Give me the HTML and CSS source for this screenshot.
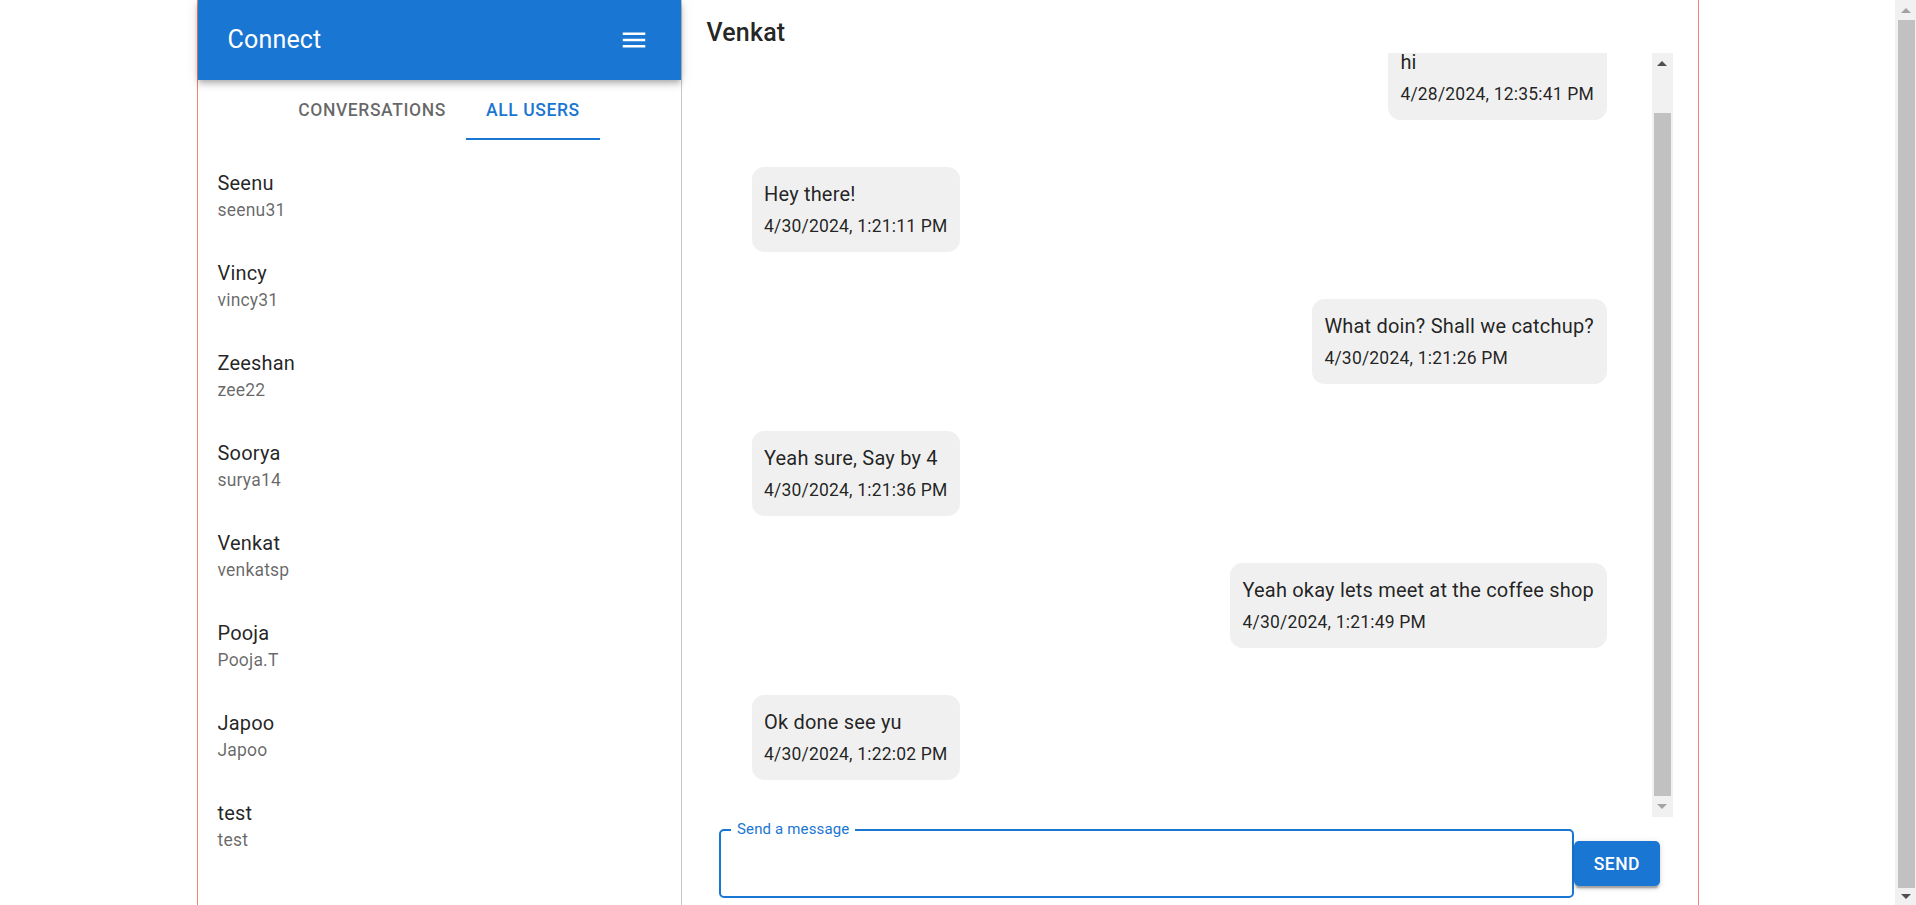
FILE: index.html
```html
<!DOCTYPE html>
<html lang="en">
<head>
<meta charset="utf-8">
<title>Connect</title>
<link rel="stylesheet" href="styles.css">
</head>
<body>
<div class="viewport">
  <div class="app">
    <aside class="sidebar">
      <header class="appbar">
        <h1 class="brand">Connect</h1>
        <svg class="menu-icon" viewBox="0 0 24 24" width="30" height="30" aria-hidden="true"><path fill="#fff" d="M3 18h18v-2H3v2zm0-5h18v-2H3v2zm0-7v2h18V6H3z"/></svg>
      </header>
      <nav class="tabs">
        <button class="tab">Conversations</button>
        <button class="tab tab-active">All Users</button>
      </nav>
      <ul class="user-list">
        <li class="user"><span class="user-name">Seenu</span><span class="user-handle">seenu31</span></li>
        <li class="user"><span class="user-name">Vincy</span><span class="user-handle">vincy31</span></li>
        <li class="user"><span class="user-name">Zeeshan</span><span class="user-handle">zee22</span></li>
        <li class="user"><span class="user-name">Soorya</span><span class="user-handle">surya14</span></li>
        <li class="user"><span class="user-name">Venkat</span><span class="user-handle">venkatsp</span></li>
        <li class="user"><span class="user-name">Pooja</span><span class="user-handle">Pooja.T</span></li>
        <li class="user"><span class="user-name">Japoo</span><span class="user-handle">Japoo</span></li>
        <li class="user"><span class="user-name">test</span><span class="user-handle">test</span></li>
      </ul>
    </aside>
    <main class="chat">
      <h2 class="chat-title">Venkat</h2>
      <div class="messages-area">
        <div class="messages">
          <div class="messages-inner">
            <div class="msg-row mine"><div class="bubble"><p class="msg-text">hi</p><p class="msg-time">4/28/2024, 12:35:41 PM</p></div></div>
            <div class="msg-row"><div class="bubble"><p class="msg-text">Hey there!</p><p class="msg-time">4/30/2024, 1:21:11 PM</p></div></div>
            <div class="msg-row mine"><div class="bubble"><p class="msg-text">What doin? Shall we catchup?</p><p class="msg-time">4/30/2024, 1:21:26 PM</p></div></div>
            <div class="msg-row"><div class="bubble"><p class="msg-text">Yeah sure, Say by 4</p><p class="msg-time">4/30/2024, 1:21:36 PM</p></div></div>
            <div class="msg-row mine"><div class="bubble"><p class="msg-text">Yeah okay lets meet at the coffee shop</p><p class="msg-time">4/30/2024, 1:21:49 PM</p></div></div>
            <div class="msg-row"><div class="bubble"><p class="msg-text">Ok done see yu</p><p class="msg-time">4/30/2024, 1:22:02 PM</p></div></div>
          </div>
        </div>
        <div class="vscroll vscroll-messages" aria-hidden="true">
          <div class="vscroll-btn"><span class="arrow-up arrow-dark"></span></div>
          <div class="vscroll-gap"></div>
          <div class="vscroll-thumb"></div>
          <div class="vscroll-btn"><span class="arrow-down arrow-light"></span></div>
        </div>
      </div>
      <form class="composer">
        <fieldset class="field">
          <legend class="field-label">Send a message</legend>
          <input class="field-input" type="text" aria-label="Send a message">
        </fieldset>
        <button class="send" type="button">Send</button>
      </form>
    </main>
  </div>
</div>
<div class="vscroll vscroll-page" aria-hidden="true">
  <div class="vscroll-btn vscroll-btn-top"><span class="arrow-up arrow-light"></span></div>
  <div class="vscroll-thumb"></div>
  <div class="vscroll-btn vscroll-btn-bottom"><span class="arrow-down arrow-dark"></span></div>
</div>
</body>
</html>
```
FILE: styles.css
```css
html, body {
  margin: 0;
  padding: 0;
  background: #fff;
}

body {
  font-family: Roboto, "Liberation Sans", Arial, sans-serif;
  color: rgba(0, 0, 0, 0.87);
  display: flex;
  align-items: flex-start;
  height: 100vh;
  overflow: hidden;
}

.viewport {
  flex: 1;
  min-width: 0;
}

/* drawn scrollbars (classic look, 125% scale) */
.vscroll {
  flex: none;
  width: 21px;
  background: #f1f1f1;
  display: flex;
  flex-direction: column;
}

.vscroll-page {
  height: 100vh;
}

.vscroll-btn {
  height: 21px;
  flex: none;
  display: flex;
  align-items: center;
  justify-content: center;
}

.vscroll-page .vscroll-btn-top {
  height: 20px;
}

.vscroll-page .vscroll-btn-bottom {
  height: 17px;
}

.vscroll-gap {
  height: 39px;
  flex: none;
}

.vscroll-thumb {
  flex: 1;
  margin: 0 2px;
  background: #c1c1c1;
}

.vscroll-page .vscroll-thumb {
  margin: 0 1px 0 3px;
}

.arrow-up,
.arrow-down {
  display: block;
  width: 0;
  height: 0;
  border-left: 5px solid transparent;
  border-right: 5px solid transparent;
}

.arrow-up {
  border-bottom: 5px solid #505050;
}

.arrow-down {
  border-top: 5px solid #505050;
}

.arrow-up.arrow-light {
  border-bottom-color: #a3a3a3;
}

.arrow-down.arrow-light {
  border-top-color: #a3a3a3;
}

.app {
  width: 1500px;
  margin: 0 auto;
  border-left: 1px solid salmon;
  border-right: 1px solid salmon;
  display: flex;
  align-items: stretch;
}

/* sidebar */
.sidebar {
  width: 483px;
  flex: none;
  border-right: 1px solid #c8c8c8;
  display: flex;
  flex-direction: column;
}

.appbar {
  position: relative;
  z-index: 1;
  height: 80px;
  box-sizing: border-box;
  padding: 0 32px 0 30px;
  background: #1976d2;
  color: #fff;
  display: flex;
  align-items: center;
  justify-content: space-between;
  box-shadow: 0 2.5px 5px -1.25px rgba(0, 0, 0, 0.2), 0 5px 6px 0 rgba(0, 0, 0, 0.14), 0 1.25px 12.5px 0 rgba(0, 0, 0, 0.12);
}

.brand {
  margin: 0;
  font-size: 25px;
  font-weight: 400;
  line-height: 40px;
  letter-spacing: 0.19px;
}

.menu-icon {
  display: block;
}

.tabs {
  display: flex;
  justify-content: center;
  height: 60px;
}

.tab {
  appearance: none;
  background: none;
  border: 0;
  border-bottom: 2.5px solid transparent;
  box-sizing: border-box;
  height: 60px;
  min-width: 112.5px;
  padding: 2.5px 20px 0;
  font-family: inherit;
  font-size: 17.5px;
  font-weight: 500;
  letter-spacing: 0.6px;
  text-transform: uppercase;
  color: rgba(0, 0, 0, 0.6);
  cursor: pointer;
}

.tab-active {
  color: #1976d2;
  border-bottom-color: #1976d2;
}

.user-list {
  list-style: none;
  margin: 0;
  padding: 10px 0;
}

.user {
  display: flex;
  flex-direction: column;
  padding: 17.5px 20px;
}

.user-name {
  font-size: 20px;
  line-height: 30px;
  letter-spacing: 0.19px;
  color: rgba(0, 0, 0, 0.87);
}

.user-handle {
  font-size: 17.5px;
  line-height: 25px;
  letter-spacing: 0.2px;
  color: rgba(0, 0, 0, 0.6);
}

/* chat */
.chat {
  flex: 1;
  min-width: 0;
  padding: 0 25px;
  display: flex;
  flex-direction: column;
}

.chat-title {
  margin: 0;
  padding-top: 12.5px;
  font-size: 25px;
  font-weight: 500;
  line-height: 40px;
  letter-spacing: 0.19px;
  color: rgba(0, 0, 0, 0.87);
}

.messages-area {
  display: flex;
  height: 764px;
}

.messages {
  flex: 1;
  min-width: 0;
  overflow: hidden;
  display: flex;
  flex-direction: column-reverse;
}

.messages-inner {
  flex: none;
  display: flex;
  flex-direction: column;
  gap: 47px;
  padding: 26px 45px 37px;
}

.msg-row {
  display: flex;
  justify-content: flex-start;
}

.msg-row.mine {
  justify-content: flex-end;
}

.bubble {
  background: #f0f0f0;
  border-radius: 12.5px;
  padding: 12.5px;
}

.msg-text {
  margin: 0;
  font-size: 20px;
  line-height: 30px;
  letter-spacing: 0.19px;
  color: rgba(0, 0, 0, 0.87);
}

.msg-time {
  margin: 5px 0 0;
  font-size: 17.5px;
  line-height: 25px;
  letter-spacing: 0.2px;
  color: rgba(0, 0, 0, 0.87);
}

.composer {
  display: flex;
  align-items: flex-end;
  margin: 0;
  padding: 5.5px 12.5px 12.5px;
}

.field {
  flex: 1;
  min-width: 0;
  margin: 0;
  padding: 0;
  border: 2px solid #1976d2;
  border-radius: 5px;
}

.field-label {
  margin-left: 10px;
  padding: 0 6px;
  font-size: 15px;
  line-height: 15px;
  letter-spacing: 0.15px;
  color: #1976d2;
}

.field-input {
  display: block;
  width: 100%;
  height: 59px;
  box-sizing: border-box;
  border: 0;
  outline: none;
  padding: 0 14px;
  font-family: inherit;
  font-size: 20px;
  background: transparent;
}

.send {
  appearance: none;
  flex: none;
  height: 45px;
  margin-bottom: 12px;
  padding: 0 20px;
  border: 0;
  border-radius: 5px;
  background: #1976d2;
  color: #fff;
  font-family: inherit;
  font-size: 17.5px;
  font-weight: 500;
  letter-spacing: 0.5px;
  text-transform: uppercase;
  cursor: pointer;
  box-shadow: 0 3.75px 1.25px -2.5px rgba(0, 0, 0, 0.2), 0 2.5px 2.5px 0 rgba(0, 0, 0, 0.14), 0 1.25px 6.25px 0 rgba(0, 0, 0, 0.12);
}
```
